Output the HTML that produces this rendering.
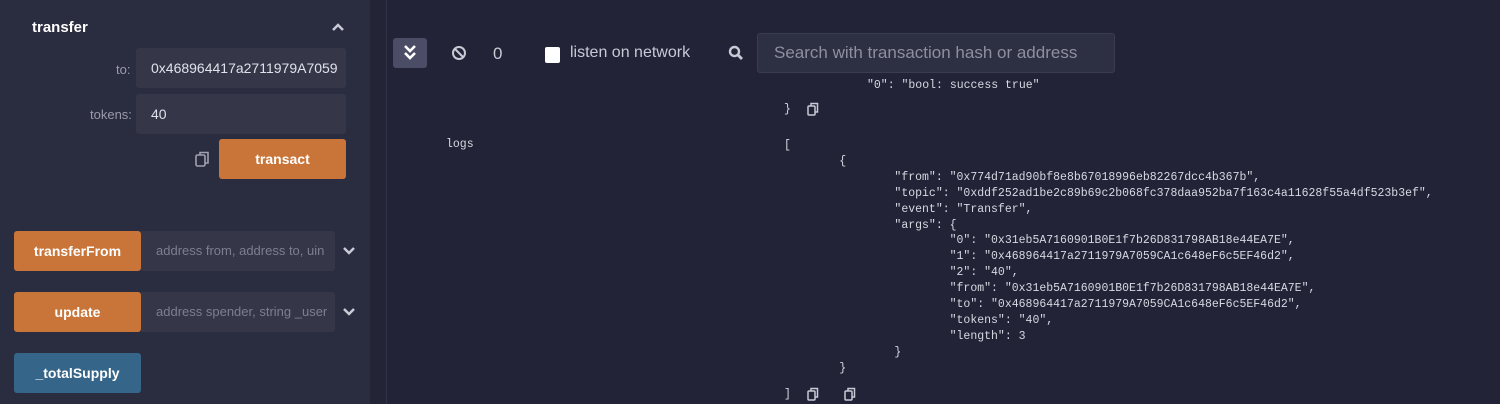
<!DOCTYPE html>
<html><head><style>
*{margin:0;padding:0;box-sizing:border-box}
body{width:1500px;height:404px;overflow:hidden;background:#222336;font-family:"Liberation Sans",sans-serif;position:relative}
.abs{position:absolute}
#left{left:0;top:0;width:370px;height:404px;background:#2a2c3f}
#strip{left:370px;top:0;width:17px;height:404px;background:#232435;border-right:1px solid #303246}
.inp{background:#353749;color:#e0e1ea;font-size:14px;padding-left:15px;line-height:40px;border-radius:3px;overflow:hidden;white-space:nowrap}
.btn{color:#fff;font-weight:bold;font-size:14px;text-align:center;border-radius:3px}
.or{background:#c97539}
.mono{font-family:"Liberation Mono",monospace;font-size:11.5px;color:#d6d8e2;white-space:pre}
.lbl{color:#9a9cac;font-size:13px}
</style></head><body>
<div id="left" class="abs"></div>
<div id="strip" class="abs"></div>
<div class="abs" style="left:32px;top:19px;color:#fff;font-weight:bold;font-size:15px">transfer</div>
<svg class="abs" style="left:331px;top:22px" width="14" height="10"><path d="M2 8 L7 3 L12 8" stroke="#c8cad6" stroke-width="2.5" fill="none"/></svg>
<div class="abs lbl" style="left:116px;top:62px">to:</div>
<div class="abs inp" style="left:136px;top:48px;width:210px;height:40px">0x468964417a2711979A7059</div>
<div class="abs lbl" style="left:90px;top:107px">tokens:</div>
<div class="abs inp" style="left:136px;top:94px;width:210px;height:40px">40</div>
<svg class="abs" style="left:195px;top:151px" width="15" height="16"><rect x="1" y="4" width="9" height="11" rx="1.5" stroke="#a0a2b2" stroke-width="1.6" fill="none"/><path d="M5 4 V1.5 H13 V12 H10" stroke="#a0a2b2" stroke-width="1.6" fill="none"/></svg>
<div class="abs btn or" style="left:219px;top:139px;width:127px;height:40px;line-height:40px">transact</div>
<div class="abs btn or" style="left:14px;top:231px;width:127px;height:40px;line-height:40px">transferFrom</div>
<div class="abs inp" style="left:141px;top:231px;width:194px;height:40px;color:#7d7f91;font-size:13px;border-radius:0 3px 3px 0">address from, address to, uin</div>
<svg class="abs" style="left:342px;top:246px" width="14" height="10"><path d="M2 2 L7 7 L12 2" stroke="#c8cad6" stroke-width="2.5" fill="none"/></svg>
<div class="abs btn or" style="left:14px;top:292px;width:127px;height:40px;line-height:40px">update</div>
<div class="abs inp" style="left:141px;top:292px;width:194px;height:40px;color:#7d7f91;font-size:13px;border-radius:0 3px 3px 0">address spender, string _user</div>
<svg class="abs" style="left:342px;top:307px" width="14" height="10"><path d="M2 2 L7 7 L12 2" stroke="#c8cad6" stroke-width="2.5" fill="none"/></svg>
<div class="abs btn" style="left:14px;top:353px;width:127px;height:40px;line-height:40px;background:#356588">_totalSupply</div>

<div class="abs" style="left:393px;top:38px;width:34px;height:30px;background:#4b4d66;border-radius:3px"></div>
<svg class="abs" style="left:403px;top:44px" width="14" height="18"><path d="M2 2 L7 7 L12 2 M2 9 L7 14 L12 9" stroke="#fff" stroke-width="2.6" fill="none"/></svg>
<svg class="abs" style="left:451px;top:45px" width="16" height="16"><circle cx="8" cy="8" r="6" stroke="#c8cad6" stroke-width="2" fill="none"/><path d="M4 4 L12 12" stroke="#c8cad6" stroke-width="2"/></svg>
<div class="abs" style="left:493px;top:44px;color:#c8cad6;font-size:17px">0</div>
<div class="abs" style="left:545px;top:47px;width:15px;height:16px;background:#fff;border-radius:2px"></div>
<div class="abs" style="left:570px;top:44px;color:#c8cad6;font-size:16px">listen on network</div>
<svg class="abs" style="left:728px;top:45px" width="16" height="16"><circle cx="6.5" cy="6.5" r="4.5" stroke="#c8cad6" stroke-width="2.4" fill="none"/><path d="M10 10 L14 14" stroke="#c8cad6" stroke-width="2.8"/></svg>
<div class="abs" style="left:757px;top:33px;width:358px;height:40px;background:#2d2f42;border:1px solid #3a3c50;border-radius:3px;color:#8e90a0;font-size:17px;line-height:38px;padding-left:16px">Search with transaction hash or address</div>

<div class="abs mono" style="left:867px;top:79px">"0": "bool: success true"</div>
<div class="abs mono" style="left:784px;top:103px">}</div>
<svg class="abs" style="left:807px;top:102px" width="12" height="14"><rect x="1" y="4" width="7" height="9" rx="1" stroke="#c8cad6" stroke-width="1.5" fill="none"/><path d="M4 4 V1.5 H10.5 V10 H8" stroke="#c8cad6" stroke-width="1.5" fill="none"/></svg>
<div class="abs mono" style="left:446px;top:138px">logs</div>
<div class="abs mono" style="left:784px;top:138px;line-height:15.9px">[
        {
                "from": "0x774d71ad90bf8e8b67018996eb82267dcc4b367b",
                "topic": "0xddf252ad1be2c89b69c2b068fc378daa952ba7f163c4a11628f55a4df523b3ef",
                "event": "Transfer",
                "args": {
                        "0": "0x31eb5A7160901B0E1f7b26D831798AB18e44EA7E",
                        "1": "0x468964417a2711979A7059CA1c648eF6c5EF46d2",
                        "2": "40",
                        "from": "0x31eb5A7160901B0E1f7b26D831798AB18e44EA7E",
                        "to": "0x468964417a2711979A7059CA1c648eF6c5EF46d2",
                        "tokens": "40",
                        "length": 3
                }
        }</div>
<div class="abs mono" style="left:784px;top:388px">]</div>
<svg class="abs" style="left:807px;top:387px" width="12" height="14"><rect x="1" y="4" width="7" height="9" rx="1" stroke="#c8cad6" stroke-width="1.5" fill="none"/><path d="M4 4 V1.5 H10.5 V10 H8" stroke="#c8cad6" stroke-width="1.5" fill="none"/></svg>
<svg class="abs" style="left:844px;top:387px" width="12" height="14"><rect x="1" y="4" width="7" height="9" rx="1" stroke="#c8cad6" stroke-width="1.5" fill="none"/><path d="M4 4 V1.5 H10.5 V10 H8" stroke="#c8cad6" stroke-width="1.5" fill="none"/></svg>
</body></html>
